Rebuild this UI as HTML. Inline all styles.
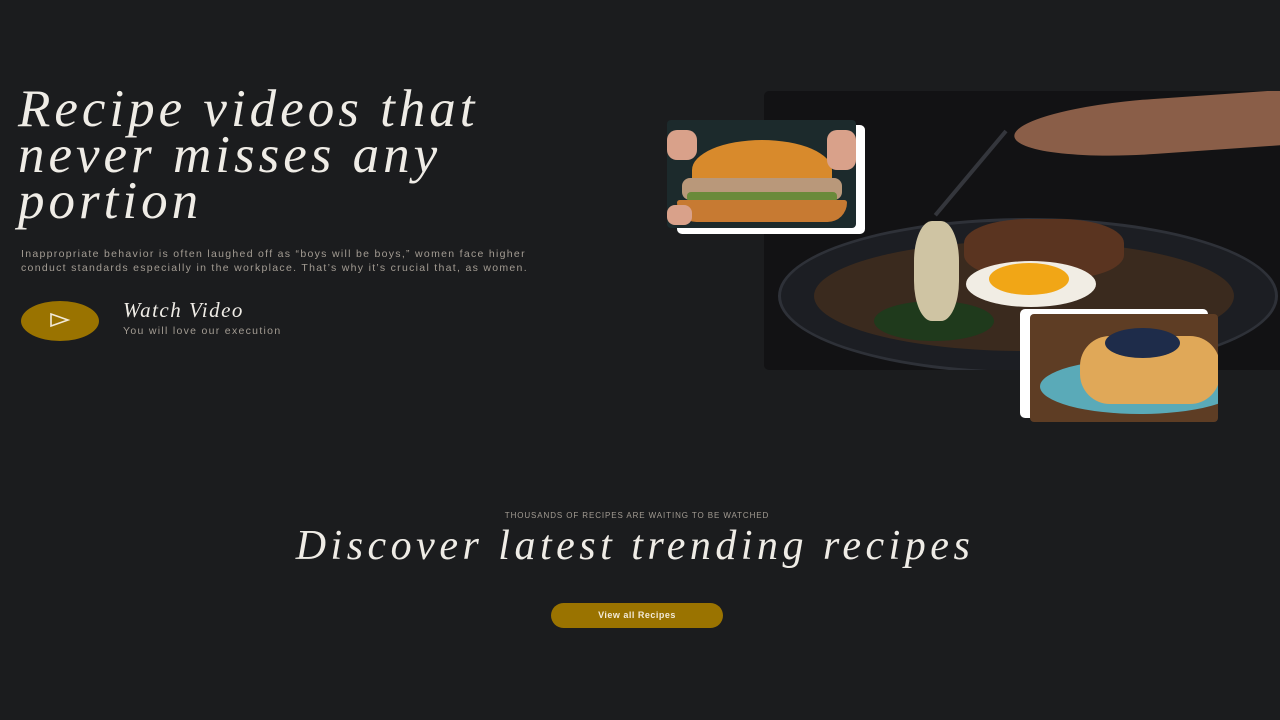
<!DOCTYPE html>
<html><head><meta charset="utf-8"><style>
*{margin:0;padding:0;box-sizing:border-box}
body{width:1280px;height:720px;background:#1b1c1e;position:relative;overflow:hidden;font-family:"Liberation Sans",sans-serif}
.script{font-family:"Liberation Serif",serif;font-style:italic;color:#efece6;position:absolute;white-space:nowrap}
.abs{position:absolute}
</style></head><body>
<div class="script" style="left:18px;top:86px;font-size:53px;line-height:46px;letter-spacing:4px;">Recipe videos that<br>never misses any<br>portion</div>
<div class="abs" style="left:21px;top:247px;font-size:10.5px;line-height:14px;color:#a39c93;white-space:nowrap;letter-spacing:1.3px">Inappropriate behavior is often laughed off as “boys will be boys,” women face higher<br>conduct standards especially in the workplace. That’s why it’s crucial that, as women.</div>
<div class="abs" style="left:21px;top:301px;width:78px;height:40px;border-radius:50%;background:#9a7300"></div>
<svg class="abs" style="left:49px;top:312px" width="22" height="16" viewBox="0 0 22 16"><path d="M2 2 L19 8 L2 14 Z" fill="none" stroke="#f2ead8" stroke-width="1.6"/></svg>
<div class="script" style="left:123px;top:298px;font-size:21px;letter-spacing:1.5px">Watch Video</div>
<div class="abs" style="left:123px;top:325px;font-size:10.5px;color:#a39c93;letter-spacing:1.3px">You will love our execution</div>

<div class="abs" style="left:764px;top:91px;width:516px;height:279px;background:#121214;border-radius:5px 0 0 5px;overflow:hidden">
  <div class="abs" style="left:14px;top:127px;width:500px;height:156px;border-radius:50%;background:#1c1e23;border:3px solid #2e3138"></div>
  <div class="abs" style="left:50px;top:150px;width:420px;height:110px;border-radius:50%;background:#3a2a1e"></div>
  <div class="abs" style="left:200px;top:128px;width:160px;height:60px;border-radius:40%;background:#5a3420"></div>
  <div class="abs" style="left:202px;top:170px;width:130px;height:46px;border-radius:50%;background:#f1ede4"></div>
  <div class="abs" style="left:225px;top:172px;width:80px;height:32px;border-radius:50%;background:#f1a616"></div>
  <div class="abs" style="left:110px;top:210px;width:120px;height:40px;border-radius:50%;background:#1f3a1c"></div>
  <div class="abs" style="left:150px;top:130px;width:45px;height:100px;border-radius:40%;background:#cfc4a3"></div>
  <div class="abs" style="left:250px;top:8px;width:280px;height:55px;border-radius:50% 0 0 50%;background:#8a5e48;transform:rotate(-4deg)"></div>
  <div class="abs" style="left:240px;top:40px;width:4px;height:110px;background:#34363c;transform:rotate(40deg);transform-origin:top"></div>
</div>

<div class="abs" style="left:677px;top:125px;width:188px;height:109px;background:#fff;border-radius:5px"></div>
<div class="abs" style="left:667px;top:120px;width:189px;height:108px;background:#1c2a2c;border-radius:4px;overflow:hidden">
  <div class="abs" style="left:25px;top:20px;width:140px;height:60px;border-radius:50% 50% 20% 20%;background:#d88a2c"></div>
  <div class="abs" style="left:15px;top:58px;width:160px;height:22px;background:#b9987a;border-radius:8px"></div>
  <div class="abs" style="left:20px;top:72px;width:150px;height:10px;background:#6a8a3a;border-radius:4px"></div>
  <div class="abs" style="left:10px;top:80px;width:170px;height:22px;background:#c77a32;border-radius:4px 4px 30px 30px"></div>
  <div class="abs" style="left:0;top:10px;width:30px;height:30px;background:#d9a18a;border-radius:10px"></div>
  <div class="abs" style="left:160px;top:10px;width:29px;height:40px;background:#d9a18a;border-radius:10px"></div>
  <div class="abs" style="left:0;top:85px;width:25px;height:20px;background:#d9a18a;border-radius:8px"></div>
</div>

<div class="abs" style="left:1020px;top:309px;width:188px;height:109px;background:#fff;border-radius:5px"></div>
<div class="abs" style="left:1030px;top:314px;width:188px;height:108px;background:#5e3d24;border-radius:4px;overflow:hidden">
  <div class="abs" style="left:10px;top:45px;width:200px;height:55px;border-radius:50%;background:#5aaab8"></div>
  <div class="abs" style="left:50px;top:22px;width:140px;height:68px;border-radius:30px;background:#e0a858"></div>
  <div class="abs" style="left:75px;top:14px;width:75px;height:30px;border-radius:50%;background:#1e2c4a"></div>
</div>

<div class="abs" style="left:0;width:1274px;top:511px;text-align:center;font-size:8px;color:#a39c93;letter-spacing:.9px">THOUSANDS OF RECIPES ARE WAITING TO BE WATCHED</div>
<div class="script" style="left:0;width:1270px;text-align:center;top:522px;font-size:42px;letter-spacing:4.5px">Discover latest trending recipes</div>
<div class="abs" style="left:551px;top:603px;width:172px;height:25px;border-radius:13px;background:#9a7300;color:#f2ead8;font-size:9px;font-weight:bold;text-align:center;line-height:25px;letter-spacing:.5px">View all Recipes</div>
</body></html>
